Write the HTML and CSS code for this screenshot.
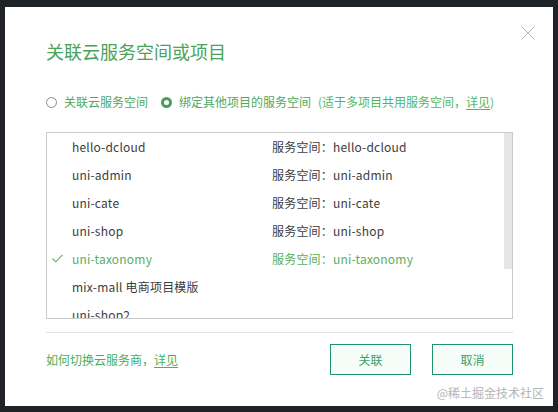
FILE: index.html
```html
<!DOCTYPE html>
<html lang="zh">
<head>
<meta charset="utf-8">
<link rel="stylesheet" href="styles.css">
</head>
<body>
<div class="dialog">
  <button class="close" aria-label="close">
    <svg width="14" height="14" viewBox="0 0 14 14"><path d="M0.5 0.5 L13.5 13.5 M13.5 0.5 L0.5 13.5" stroke="#b5b5b5" stroke-width="1" fill="none"/></svg>
  </button>
  <h1 class="title">关联云服务空间或项目</h1>
  <div class="radios">
    <label class="radio"><span class="dot"></span>关联云服务空间</label>
    <label class="radio on"><span class="dot"></span>绑定其他项目的服务空间<span class="hint">(适于多项目共用服务空间，<u>详见</u>)</span></label>
  </div>
  <div class="list">
    <div class="rows">
      <div class="row"><span class="check"></span><span class="c1">hello-dcloud</span><span class="c2">服务空间：hello-dcloud</span></div>
      <div class="row"><span class="check"></span><span class="c1">uni-admin</span><span class="c2">服务空间：uni-admin</span></div>
      <div class="row"><span class="check"></span><span class="c1">uni-cate</span><span class="c2">服务空间：uni-cate</span></div>
      <div class="row"><span class="check"></span><span class="c1">uni-shop</span><span class="c2">服务空间：uni-shop</span></div>
      <div class="row sel"><span class="check"><svg width="11" height="9" viewBox="0 0 11 9"><path d="M0.5 4.5 L3.8 7.8 L10.5 0.8" stroke="#5db35d" stroke-width="1.1" fill="none"/></svg></span><span class="c1">uni-taxonomy</span><span class="c2">服务空间：uni-taxonomy</span></div>
      <div class="row"><span class="check"></span><span class="c1">mix-mall 电商项目模版</span><span class="c2"></span></div>
      <div class="row last"><span class="check"></span><span class="c1">uni-shop2</span><span class="c2"></span></div>
    </div>
    <div class="scroll"><div class="thumb"></div></div>
  </div>
  <div class="divider"></div>
  <div class="footer">
    <div class="help">如何切换云服务商，<u>详见</u></div>
    <div class="buttons">
      <button class="btn">关联</button>
      <button class="btn">取消</button>
    </div>
  </div>
  <div class="watermark">@稀土掘金技术社区</div>
</div>
</body>
</html>
```
FILE: styles.css
```css
html, body {
  margin: 0;
  height: 100%;
}
body {
  background: #1f2226;
  padding: 7px 5px 6px 5px;
  box-sizing: border-box;
  font-family: "Noto Sans CJK SC", "Noto Sans", sans-serif;
}
.dialog {
  position: relative;
  background: #fff;
  height: 399px;
  box-sizing: border-box;
  padding: 32px 40px 0 41px;
}
.close {
  position: absolute;
  top: 19px;
  right: 18px;
  width: 14px;
  height: 14px;
  padding: 0;
  border: 0;
  background: none;
  display: block;
}
.close svg { display: block; }
.title {
  margin: 0;
  font-size: 18px;
  line-height: 24px;
  font-weight: normal;
  color: #4aa25b;
}
.radios {
  margin-top: 29px;
  height: 20px;
  display: flex;
  align-items: center;
  gap: 13px;
  font-size: 12px;
  line-height: 20px;
  color: #4fa85e;
}
.radio {
  display: flex;
  align-items: center;
}
.dot {
  width: 11px;
  height: 11px;
  box-sizing: border-box;
  border: 1px solid #8a8a8a;
  border-radius: 50%;
  margin: 0 7px 0 0;
  background: #fff;
}
.radio.on .dot {
  border: 3.5px solid #4a9e5c;
  background: #fff;
}
.hint {
  margin-left: 7px;
  color: #4fb85e;
}
u {
  text-underline-offset: 2px;
}
.list {
  margin-top: 20px;
  height: 187px;
  box-sizing: border-box;
  border: 1px solid #cacaca;
  display: flex;
}
.rows {
  flex: 1;
  overflow: hidden;
  margin-top: -1px;
}
.row {
  height: 28px;
  display: flex;
  align-items: center;
  font-size: 12px;
  letter-spacing: 0.2px;
  color: #3c3c3c;
  white-space: nowrap;
}
.row.last {
  align-items: flex-end;
  height: 22px;
  line-height: 14px;
}
.check {
  width: 25px;
  padding-left: 5px;
  box-sizing: border-box;
  display: flex;
  align-items: center;
}
.c1 { width: 200px; }
.row.sel { color: #5aae5e; }
.scroll {
  width: 8px;
}
.thumb {
  height: 136px;
  background: #e6e6e6;
}
.divider {
  margin-top: 13px;
  height: 1px;
  background: #e2e2e2;
}
.footer {
  margin-top: 11px;
  display: flex;
  align-items: center;
  justify-content: space-between;
}
.help {
  font-size: 12px;
  color: #45b158;
}
.buttons {
  display: flex;
  gap: 21px;
}
.btn {
  width: 81px;
  height: 31px;
  box-sizing: border-box;
  border: 1px solid #1f946a;
  background: #f6fdf9;
  color: #3f9e5e;
  font-family: "Noto Sans CJK SC", sans-serif;
  font-size: 12px;
  padding: 0;
}
.watermark {
  position: absolute;
  right: 9px;
  bottom: 5px;
  font-size: 12px;
  color: #b4b4b4;
}
```
